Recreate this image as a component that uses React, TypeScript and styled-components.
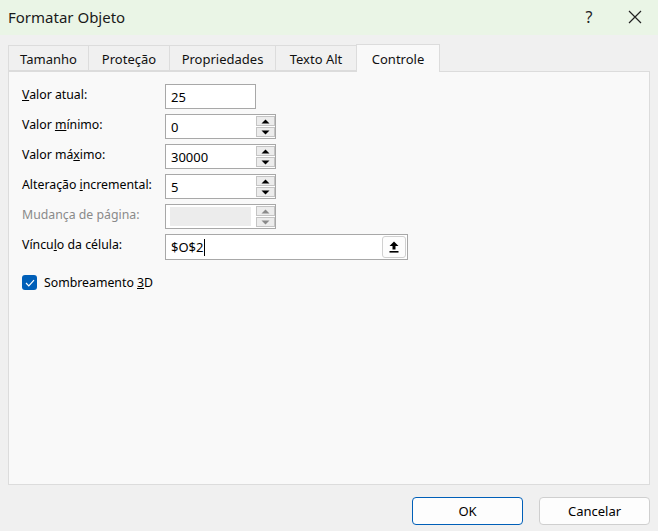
import styled, { createGlobalStyle } from 'styled-components';

const GlobalStyle = createGlobalStyle`
    html, body {
        margin: 0;
        padding: 0;
        background: #f0f0f0;
    }
    * {
        box-sizing: border-box;
    }
`;

type Field = {
    label: React.ReactNode;
    value: string;
    spin: boolean;
    disabled?: boolean;
};

const fields: Field[] = [
    { label: <><u>V</u>alor atual:</>, value: '25', spin: false },
    { label: <>Valor <u>m</u>ínimo:</>, value: '0', spin: true },
    { label: <>Valor má<u>x</u>imo:</>, value: '30000', spin: true },
    { label: <>Alteração <u>i</u>ncremental:</>, value: '5', spin: true },
    { label: <>Mudança de página:</>, value: '', spin: true, disabled: true },
];

const tabs = [
    { name: 'Tamanho', width: 81 },
    { name: 'Proteção', width: 82 },
    { name: 'Propriedades', width: 107 },
    { name: 'Texto Alt', width: 82 },
    { name: 'Controle', width: 84 },
];

const Arrow = ({ up, disabled }: { up: boolean; disabled?: boolean }) => (
    <svg width="9" height="5" viewBox="0 0 9 5">
        <path
            d={up ? 'M0.5 4.5 L4.5 0.5 L8.5 4.5 Z' : 'M0.5 0.5 L4.5 4.5 L8.5 0.5 Z'}
            fill={disabled ? '#8a8a8a' : '#000'}
        />
    </svg>
);

export default function App() {
    return (
        <Window>
            <GlobalStyle />
            <TitleBar>
                <Title>Formatar Objeto</Title>
                <TitleButtons>
                    <TitleButton>?</TitleButton>
                    <TitleButton>
                        <svg width="14" height="14" viewBox="0 0 14 14">
                            <path d="M1 1 L13 13 M13 1 L1 13" stroke="#222" strokeWidth="1.2" />
                        </svg>
                    </TitleButton>
                </TitleButtons>
            </TitleBar>
            <Body>
                <TabStrip>
                    {tabs.map((t) => (
                        <Tab key={t.name} active={t.name === 'Controle'} w={t.width}>
                            {t.name}
                        </Tab>
                    ))}
                </TabStrip>
                <Panel>
                    <Form>
                        {fields.map((f, i) => (
                            <Row key={i}>
                                <Label disabled={f.disabled}>{f.label}</Label>
                                <InputBox wide={false} spin={f.spin}>
                                    <InputText disabled={f.disabled}>{f.value}</InputText>
                                    {f.spin && (
                                        <Spin>
                                            <SpinButton>
                                                <Arrow up disabled={f.disabled} />
                                            </SpinButton>
                                            <SpinButton>
                                                <Arrow up={false} disabled={f.disabled} />
                                            </SpinButton>
                                        </Spin>
                                    )}
                                </InputBox>
                            </Row>
                        ))}
                        <Row>
                            <Label>
                                Víncu<u>l</u>o da célula:
                            </Label>
                            <InputBox wide spin={false}>
                                <InputText>
                                    $O$2<Caret />
                                </InputText>
                                <RefButton>
                                    <svg width="10" height="12" viewBox="0 0 10 12">
                                        <path d="M5 0.5 L9.5 5 L6.5 5 L6.5 8.5 L3.5 8.5 L3.5 5 L0.5 5 Z" fill="#000" />
                                        <rect x="0.5" y="10" width="9" height="1.6" fill="#000" />
                                    </svg>
                                </RefButton>
                            </InputBox>
                        </Row>
                    </Form>
                    <CheckRow>
                        <CheckBox>
                            <svg width="10" height="8" viewBox="0 0 10 8">
                                <path d="M1 4 L3.8 6.8 L9 1.2" stroke="#fff" strokeWidth="1.2" fill="none" />
                            </svg>
                        </CheckBox>
                        <span>
                            Sombreamento <u>3</u>D
                        </span>
                    </CheckRow>
                </Panel>
                <Footer>
                    <Button primary>OK</Button>
                    <Button>Cancelar</Button>
                </Footer>
            </Body>
        </Window>
    );
}

const Window = styled.div`
    width: 658px;
    height: 531px;
    background: #f0f0f0;
    font-family: 'Segoe UI', 'Noto Sans', 'Open Sans', sans-serif;
    font-size: 12px;
    color: #000;
    display: flex;
    flex-direction: column;
    overflow: hidden;
`;

const TitleBar = styled.div`
    height: 35px;
    background: #eaf5e6;
    display: flex;
    align-items: center;
    justify-content: space-between;
    padding-left: 8px;
`;

const Title = styled.div`
    font-size: 15px;
    color: #1a1a1a;
    margin-top: -2px;
`;

const TitleButtons = styled.div`
    display: flex;
    height: 100%;
`;

const TitleButton = styled.div`
    width: 46px;
    display: flex;
    align-items: center;
    justify-content: center;
    font-size: 16px;
    color: #222;
    margin-top: -2px;
`;

const Body = styled.div`
    flex: 1;
    display: flex;
    flex-direction: column;
    padding: 9px 8px 0 8px;
`;

const TabStrip = styled.div`
    display: flex;
    align-items: flex-end;
    height: 27px;
    position: relative;
    z-index: 1;
`;

const Tab = styled.div<{ active: boolean; w: number }>`
    width: ${({ w }) => w}px;
    height: ${({ active }) => (active ? '28px' : '26px')};
    margin-bottom: ${({ active }) => (active ? '-1px' : '0')};
    display: flex;
    align-items: center;
    justify-content: center;
    padding-top: ${({ active }) => (active ? '0' : '2px')};
    border: 1px solid #dcdcdc;
    border-bottom: ${({ active }) => (active ? 'none' : '1px solid #dcdcdc')};
    margin-right: -1px;
    background: ${({ active }) => (active ? '#f9f9f9' : '#f0f0f0')};
    font-size: 13px;
    color: #111;
`;

const Panel = styled.div`
    height: 414px;
    background: #f9f9f9;
    border: 1px solid #dcdcdc;
    padding: 12px 13px;
`;

const Form = styled.div`
    display: flex;
    flex-direction: column;
    gap: 5px;
`;

const Row = styled.div`
    display: grid;
    grid-template-columns: 143px auto;
    align-items: start;
    height: 25px;
`;

const Label = styled.div<{ disabled?: boolean }>`
    padding-top: 2px;
    font-size: 12.3px;
    color: ${({ disabled }) => (disabled ? '#8a8a8a' : '#000')};
`;

const InputBox = styled.div<{ wide: boolean; spin: boolean }>`
    width: ${({ wide, spin }) => (wide ? '243px' : spin ? '111px' : '91px')};
    height: ${({ wide }) => (wide ? '26px' : '25px')};
    border: 1px solid #a8a8a8;
    background: #fff;
    display: flex;
    align-items: stretch;
`;

const InputText = styled.div<{ disabled?: boolean }>`
    flex: 1;
    display: flex;
    align-items: center;
    padding-left: 5px;
    font-size: 13px;
    background: ${({ disabled }) => (disabled ? '#ececec' : '#fff')};
    margin: ${({ disabled }) => (disabled ? '2px 5px 2px 4px' : '0')};
`;

const Caret = styled.span`
    display: inline-block;
    width: 1px;
    height: 17px;
    background: #000;
    margin-left: 1px;
`;

const Spin = styled.div`
    width: 19px;
    display: flex;
    flex-direction: column;
    gap: 1px;
    padding: 1px 0 1px 0;
`;

const SpinButton = styled.div`
    flex: 1;
    display: flex;
    align-items: center;
    justify-content: center;
    background: #ececec;
    border: 1px solid #c4c4c4;
`;

const RefButton = styled.div`
    width: 24px;
    margin: 1px 1px 1px 0;
    border: 1px solid #d0d0d0;
    border-radius: 3px;
    background: #fdfdfd;
    display: flex;
    align-items: center;
    justify-content: center;
`;

const CheckRow = styled.div`
    display: flex;
    align-items: center;
    gap: 7px;
    margin-top: 15px;
    font-size: 12.3px;
`;

const CheckBox = styled.div`
    width: 15px;
    height: 15px;
    border-radius: 3px;
    background: #005fb8;
    display: flex;
    align-items: center;
    justify-content: center;
`;

const Footer = styled.div`
    display: flex;
    justify-content: flex-end;
    gap: 16px;
    padding-top: 12px;
`;

const Button = styled.div<{ primary?: boolean }>`
    width: 111px;
    height: 28px;
    border-radius: 4px;
    border: 1px solid ${({ primary }) => (primary ? '#005fb8' : '#cfcfcf')};
    background: #fdfdfd;
    display: flex;
    align-items: center;
    justify-content: center;
    font-size: 13px;
`;
